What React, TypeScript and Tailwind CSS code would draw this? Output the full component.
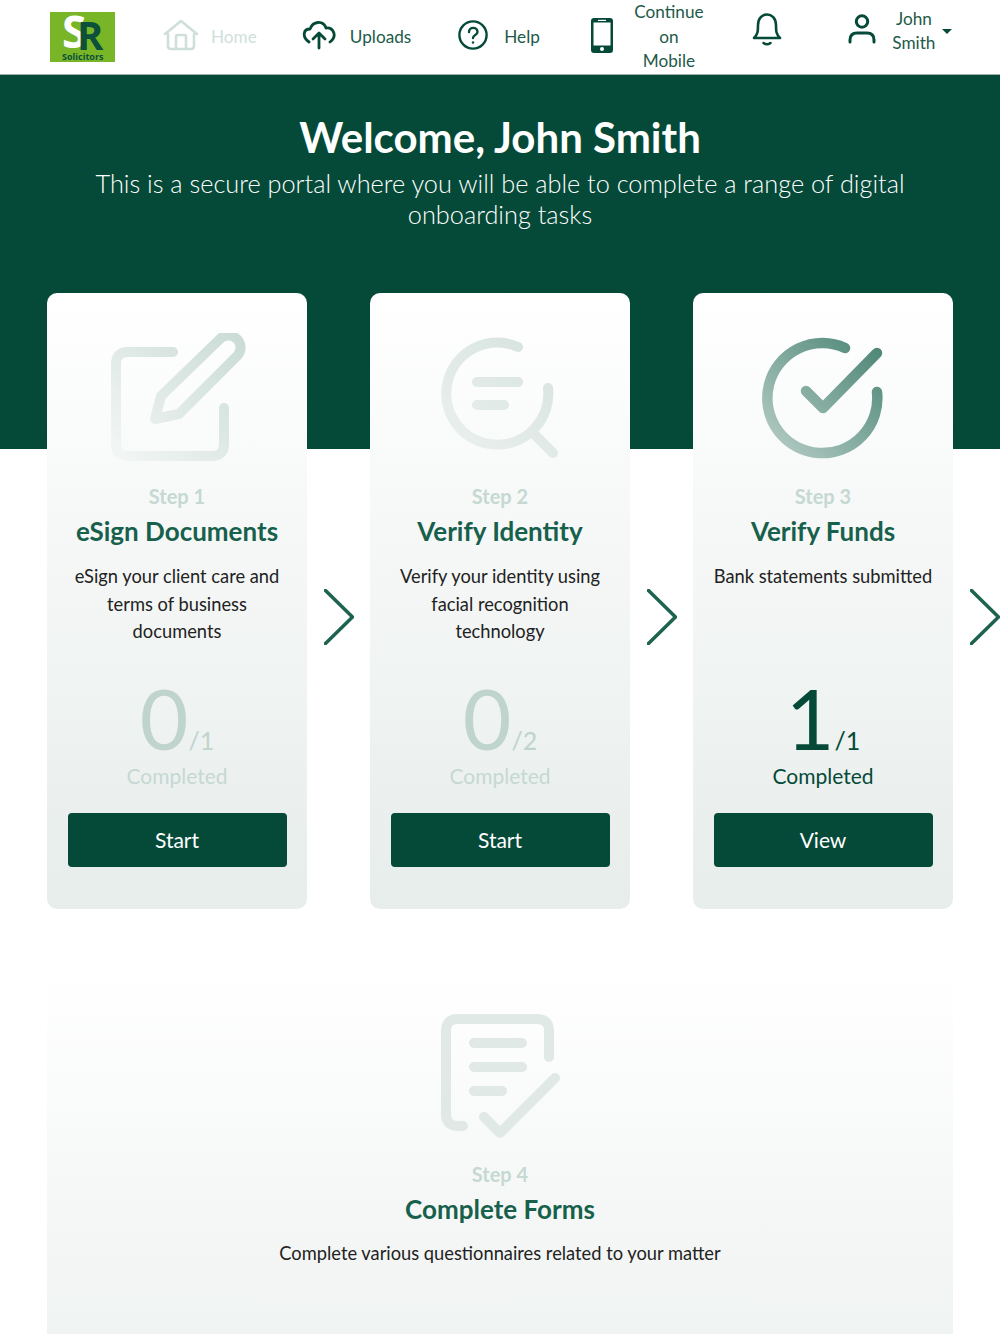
const DARK = '#054a38';

function Logo() {
  return (
    <div className="relative h-[50px] w-[65px] bg-[#78b628] font-['Open_Sans',sans-serif]">
      <span className="absolute left-[12px] top-[-3px] text-[44px] leading-[44px] font-bold text-white">S</span>
      <span className="absolute left-[27px] top-[3px] text-[40px] leading-[40px] font-bold text-[#0c4f3a]">R</span>
      <span className="absolute left-[12px] top-[39px] text-[9px] leading-[11px] font-bold text-[#0c4f3a]">Solicitors</span>
    </div>
  );
}

function HomeIcon() {
  return (
    <svg width="36" height="32" viewBox="0 0 36 32" fill="none" stroke="#cfdfdb" strokeWidth="2.6" strokeLinecap="round" strokeLinejoin="round">
      <path d="M2 15 L18 2 L34 15" />
      <path d="M5 15 V27 Q5 30 8 30 H28 Q31 30 31 27 V15" />
      <path d="M13 30 V18 Q13 16 15 16 H21 Q23 16 23 18 V30" />
    </svg>
  );
}

function UploadIcon() {
  return (
    <svg width="34" height="30" viewBox="0 0 34 30" fill="none" stroke={DARK} strokeWidth="2.8" strokeLinecap="round" strokeLinejoin="round">
      <path d="M7 22 C0 17 1 9 8 9 C11 1 21 0 24 8 C31 7 36 16 28 22" />
      <path d="M17 28 V14 M11 19 L17 13 L23 19" />
    </svg>
  );
}

function HelpIcon() {
  return (
    <svg width="30" height="30" viewBox="0 0 30 30" fill="none" stroke={DARK} strokeWidth="2.4" strokeLinecap="round">
      <circle cx="15" cy="15" r="13.6" />
      <path d="M11 12 C11 6.500 19.500 6.500 19.500 12 C19.500 15 15 15 15 18" />
      <circle cx="15" cy="22.500" r="1.200" fill={DARK} stroke="none" />
    </svg>
  );
}

function PhoneIcon() {
  return (
    <svg width="22" height="35" viewBox="0 0 22 35">
      <rect x="0" y="0" width="22" height="35" rx="3" fill={DARK} />
      <rect x="2.500" y="4.500" width="17" height="23" fill="#fff" />
      <rect x="7" y="1.800" width="8" height="1.200" fill="#fff" />
      <circle cx="11" cy="31" r="2" fill="#fff" />
    </svg>
  );
}

function BellIcon() {
  return (
    <svg width="30" height="35" viewBox="0 0 30 35" fill="none" stroke={DARK} strokeWidth="2.6" strokeLinecap="round" strokeLinejoin="round">
      <path d="M2 26 C6 22 6 19 6 13 C6 -1 24 -1 24 13 C24 19 24 22 28 26 Z" />
      <path d="M11.500 31 Q15 33.500 18.500 31" />
    </svg>
  );
}

function UserIcon() {
  return (
    <svg width="28" height="30" viewBox="0 0 28 30" fill="none" stroke={DARK} strokeWidth="3" strokeLinecap="round">
      <circle cx="14" cy="7.500" r="5.700" />
      <path d="M2 28 V26 Q2 19 9 19 H19 Q26 19 26 26 V28" />
    </svg>
  );
}

function Navbar() {
  return (
    <nav className="h-[75px] bg-white border-b border-[#9fb0aa] flex items-center text-[17.200px] text-[#1d5a49] pl-[50px]">
      <Logo />
      <div className="ml-[48px] -mt-[4px]"><HomeIcon /></div>
      <span className="ml-[12px] text-[#cfdfdb]">Home</span>
      <div className="ml-[45px] -mt-[4px]"><UploadIcon /></div>
      <span className="ml-[14px]">Uploads</span>
      <div className="ml-[47px] -mt-[4px]"><HelpIcon /></div>
      <span className="ml-[16px]">Help</span>
      <div className="ml-[51px] -mt-[4px]"><PhoneIcon /></div>
      <div className="ml-[21px] w-[70px] text-center leading-[24.500px]">Continue on Mobile</div>
      <div className="ml-[48px] -mt-[16px]"><BellIcon /></div>
      <div className="ml-[66px] -mt-[16px]"><UserIcon /></div>
      <div className="ml-[14px] -mt-[12px] w-[48px] text-center leading-[24.500px]">John Smith</div>
      <div className="ml-[4px] -mt-[12px] w-0 h-0 border-x-[5px] border-x-transparent border-t-[5px] border-t-[#054a38]" />
    </nav>
  );
}

function Gradient({ id, from, to, x1, y1, x2, y2 }: { id: string; from: string; to: string; x1: number; y1: number; x2: number; y2: number }) {
  return (
    <linearGradient id={id} gradientUnits="userSpaceOnUse" x1={x1} y1={y1} x2={x2} y2={y2}>
      <stop offset="0" stopColor={from} />
      <stop offset="1" stopColor={to} />
    </linearGradient>
  );
}

function SignIcon() {
  return (
    <svg width="260" height="130" viewBox="47 333 260 130" fill="none" stroke="url(#sign)" strokeWidth="10" strokeLinecap="round" strokeLinejoin="round">
      <defs><Gradient id="sign" from="#cbdcd7" to="#f3f6f5" x1={240} y1={340} x2={116} y2={460} /></defs>
      <path d="M173 352 H128 Q116 352 116 364 V444 Q116 456 128 456 H212 Q224 456 224 444 V408" />
      <path d="M155 419 L161 396 L220 339 A12 12 0 0 1 237 356 L179 414 Z" />
    </svg>
  );
}

function IdentityIcon() {
  return (
    <svg width="260" height="130" viewBox="370 333 260 130" fill="none" stroke="url(#identity)" strokeWidth="10" strokeLinecap="round" strokeLinejoin="round">
      <defs><Gradient id="identity" from="#d6e3df" to="#ebf0ee" x1={550} y1={340} x2={445} y2={450} /></defs>
      <path d="M518 347 A51 51 0 1 0 548 388" />
      <path d="M535 435 L553 453" />
      <path d="M477 382 H518 M477 405 H504" />
    </svg>
  );
}

function FundsIcon() {
  return (
    <svg width="260" height="130" viewBox="693 333 260 130" fill="none" stroke="url(#funds)" strokeWidth="10.500" strokeLinecap="round" strokeLinejoin="round">
      <defs><Gradient id="funds" from="#4d8676" to="#b6cdc6" x1={880} y1={345} x2={770} y2={455} /></defs>
      <path d="M845 348 A55 55 0 1 0 877 392" />
      <path d="M806 391 L823 408 L877 353" />
    </svg>
  );
}

function FormsIcon() {
  return (
    <svg width="906" height="132" viewBox="47 1010 906 132" fill="none" stroke="#e1e9e6" strokeWidth="10" strokeLinecap="round" strokeLinejoin="round">
      <path d="M549 1057 V1031 Q549 1019 537 1019 H458 Q446 1019 446 1031 V1114 Q446 1126 458 1126 H463" />
      <path d="M474 1043 H522 M474 1067 H522 M474 1091 H502" />
      <path d="M484 1117 L500 1133 L555 1078" />
    </svg>
  );
}

type Step = {
  icon: React.ReactNode;
  step: string;
  title: string;
  body: string;
  done: number;
  total: number;
  action: string;
};

const steps: Step[] = [
  { icon: <SignIcon />, step: 'Step 1', title: 'eSign Documents', body: 'eSign your client care and terms of business documents', done: 0, total: 1, action: 'Start' },
  { icon: <IdentityIcon />, step: 'Step 2', title: 'Verify Identity', body: 'Verify your identity using facial recognition technology', done: 0, total: 2, action: 'Start' },
  { icon: <FundsIcon />, step: 'Step 3', title: 'Verify Funds', body: 'Bank statements submitted', done: 1, total: 1, action: 'View' },
];

function Chevron() {
  return (
    <div className="w-[63px] shrink-0 flex justify-center pt-[296px]">
      <svg width="30" height="56" viewBox="0 0 30 56" fill="none" stroke="#1d6350" strokeWidth="3.500" strokeLinecap="round" strokeLinejoin="round">
        <path d="M1.500 1.500 L28.500 28 L1.500 54.500" />
      </svg>
    </div>
  );
}

function StepCard({ item }: { item: Step }) {
  const complete = item.done === item.total;
  return (
    <div className="w-[260px] shrink-0 h-[616px] rounded-[10px] bg-linear-to-b from-white to-[#e7edeb] pt-[40px] flex flex-col items-center text-center">
      {item.icon}
      <div className="mt-[19px] text-[20px] leading-[28px] font-bold text-[#c5d8d2]">{item.step}</div>
      <h2 className="mt-[4px] text-[26px] leading-[34px] font-bold text-[#17604c]">{item.title}</h2>
      <p className="mt-[15px] h-[83px] px-[20px] text-[18.300px] leading-[27.500px] text-[#222]">{item.body}</p>
      <div className={`mt-[30px] flex items-baseline justify-center ${complete ? 'text-[#054a38]' : 'text-[#c0d4ce]'}`}>
        <span className="text-[84px] leading-[84px]">{item.done}</span>
        <span className="text-[25px] leading-[25px]">/{item.total}</span>
      </div>
      <div className={`mt-[2px] text-[21px] leading-[28px] ${complete ? 'text-[#054a38]' : 'text-[#c5d8d2]'}`}>Completed</div>
      <button className="mt-[23px] h-[54px] w-[219px] rounded-[4px] bg-[#054a38] text-white text-[21px]">{item.action}</button>
    </div>
  );
}

export default function App() {
  return (
    <div className="h-[1334px] overflow-hidden bg-white font-['Lato',sans-serif]">
      <Navbar />
      <header className="h-[374px] bg-[#054a38] text-white text-center pt-[36px]">
        <h1 className="text-[42px] leading-[53px] font-bold">Welcome, John Smith</h1>
        <p className="mt-[4px] mx-auto w-[830px] text-[25.300px] leading-[31px] font-light">
          This is a secure portal where you will be able to complete a range of digital onboarding tasks
        </p>
      </header>
      <main className="-mt-[156px] pl-[47px]">
        <div className="flex">
          {steps.map((item) => (
            <div key={item.step} className="flex">
              <StepCard item={item} />
              <Chevron />
            </div>
          ))}
        </div>
        <section className="mt-[61px] w-[906px] h-[500px] rounded-[10px] bg-linear-to-b from-white to-[#eaefed] pt-[40px] flex flex-col items-center text-center">
          <FormsIcon />
          <div className="mt-[18px] text-[20px] leading-[28px] font-bold text-[#c5d8d2]">Step 4</div>
          <h2 className="mt-[4px] text-[26px] leading-[34px] font-bold text-[#17604c]">Complete Forms</h2>
          <p className="mt-[14px] text-[18.300px] leading-[27.500px] text-[#222]">Complete various questionnaires related to your matter</p>
        </section>
      </main>
    </div>
  );
}
